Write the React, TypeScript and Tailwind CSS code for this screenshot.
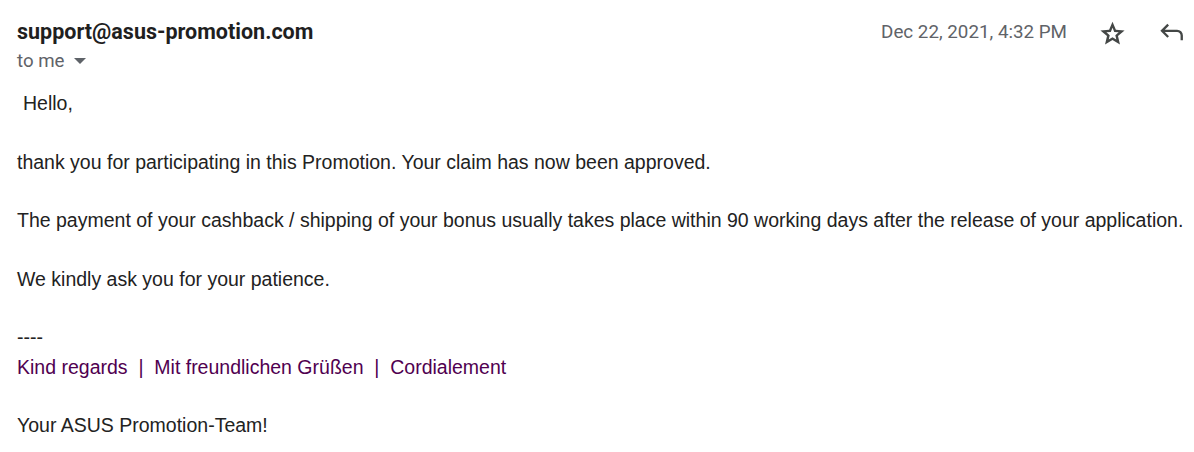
import React from "react";

function StarIcon() {
  return (
    <svg width="29" height="29" viewBox="0 -960 960 960" fill="#444746">
      <path d="m354-247 126-76 126 77-33-144 111-96-146-13-57-136-57 135-146 13 111 97-33 143ZM233-80l65-281L80-550l288-25 112-265 112 265 288 25-218 189 65 281-247-149L233-80Z" />
    </svg>
  );
}

function ReplyIcon() {
  return (
    <svg width="28" height="28" viewBox="0 -960 960 960" fill="#444746">
      <path d="M774-200v-160q0-50-35-85t-85-35H233l144 144-56 56-240-240 240-240 56 56-144 144h421q83 0 141.5 58.5T854-360v160h-80Z" />
    </svg>
  );
}

export default function App() {
  return (
    <main className="w-[1194px] h-[452px] bg-white overflow-hidden">
      <div className="flex items-start justify-between pl-[17px] pr-[8px] pt-[17px]">
        <div>
          <div className="font-['Roboto',sans-serif] font-bold text-[21.5px] leading-[30px] text-[#1f1f1f]">
            support@asus-promotion.com
          </div>
          <div className="flex items-center gap-[9px] font-['Roboto',sans-serif] text-[18.7px] leading-[28px] text-[#5f6368]">
            <span>to me</span>
            <svg width="12" height="6" viewBox="0 0 12 6" fill="#5f6368">
              <path d="M0 0h12L6 6z" />
            </svg>
          </div>
        </div>
        <div className="flex items-center h-[30px] font-['Roboto',sans-serif] text-[18.8px] text-[#5f6368]">
          <span className="mr-[31px]">Dec 22, 2021, 4:32 PM</span>
          <span className="mr-[31px] flex"><StarIcon /></span>
          <span className="flex"><ReplyIcon /></span>
        </div>
      </div>

      <div className="pl-[17px] pt-[14px] font-['Liberation_Sans',Arial,sans-serif] text-[19.5px] leading-[29.3px] text-[#222222]">
        <div className="pl-[6px]">Hello,</div>
        <br />
        <div>thank you for participating in this Promotion. Your claim has now been approved.</div>
        <br />
        <div>The payment of your cashback / shipping of your bonus usually takes place within 90 working days after the release of your application.</div>
        <br />
        <div>We kindly ask you for your patience.</div>
        <br />
        <div>----</div>
        <div className="text-[#500050]">
          Kind regards&nbsp; |&nbsp; Mit freundlichen Grüßen&nbsp; |&nbsp; Cordialement
        </div>
        <br />
        <div>Your ASUS Promotion-Team!</div>
      </div>
    </main>
  );
}
